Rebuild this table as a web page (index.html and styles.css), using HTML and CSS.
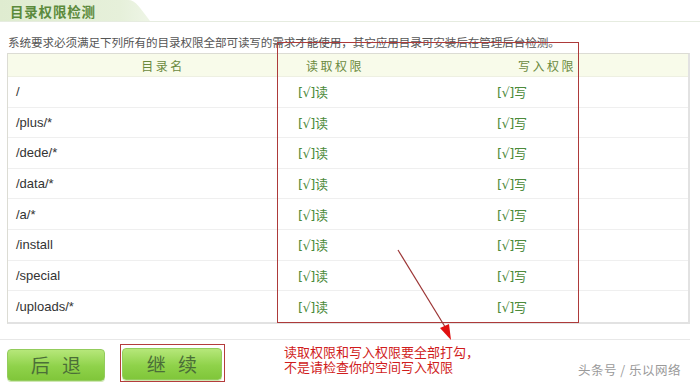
FILE: index.html
```html
<!DOCTYPE html>
<html lang="zh-CN">
<head>
<meta charset="utf-8">
<title>目录权限检测</title>
<link rel="stylesheet" href="styles.css">
</head>
<body>
<div class="page">
  <div class="titlebar">
    <svg class="tab" width="160" height="22" viewBox="0 0 160 22">
      <defs>
        <linearGradient id="tg" x1="0" y1="0" x2="1" y2="0">
          <stop offset="0" stop-color="#dfecd0"/>
          <stop offset="0.8" stop-color="#e6f0da"/>
          <stop offset="1" stop-color="#eef5e6"/>
        </linearGradient>
      </defs>
      <path d="M0 0 H128 C136 0 140 8 150 21 H0 Z" fill="url(#tg)"/>
    </svg>
    <h1 class="title">目录权限检测</h1>
  </div>
  <p class="desc">系统要求必须满足下列所有的目录权限全部可读写的需求才能使用，其它应用目录可安装后在管理后台检测。</p>
  <div class="table">
    <div class="row head">
      <div class="c1">目录名</div>
      <div class="c2">读取权限</div>
      <div class="c3">写入权限</div>
    </div>
    <div class="row"><div class="c1">/</div><div class="c2 ok">[√]读</div><div class="c3 ok">[√]写</div></div>
    <div class="row"><div class="c1">/plus/*</div><div class="c2 ok">[√]读</div><div class="c3 ok">[√]写</div></div>
    <div class="row"><div class="c1">/dede/*</div><div class="c2 ok">[√]读</div><div class="c3 ok">[√]写</div></div>
    <div class="row"><div class="c1">/data/*</div><div class="c2 ok">[√]读</div><div class="c3 ok">[√]写</div></div>
    <div class="row"><div class="c1">/a/*</div><div class="c2 ok">[√]读</div><div class="c3 ok">[√]写</div></div>
    <div class="row"><div class="c1">/install</div><div class="c2 ok">[√]读</div><div class="c3 ok">[√]写</div></div>
    <div class="row"><div class="c1">/special</div><div class="c2 ok">[√]读</div><div class="c3 ok">[√]写</div></div>
    <div class="row last"><div class="c1">/uploads/*</div><div class="c2 ok">[√]读</div><div class="c3 ok">[√]写</div></div>
  </div>
  <div class="footer">
    <button class="btn">后 退</button>
    <span class="mark"><button class="btn">继 续</button></span>
    <p class="note">读取权限和写入权限要全部打勾，<br>不是请检查你的空间写入权限</p>
  </div>

  <div class="redbox"></div>
  <svg class="arrow" width="80" height="100" viewBox="0 0 80 100">
    <line x1="3" y1="2" x2="52" y2="82" stroke="#9b3434" stroke-width="1.2"/>
    <path d="M56 92 L45 80 L54 76 Z" fill="#e01010"/>
  </svg>
  <div class="watermark">头条号 / 乐以网络</div>
</div>
</body>
</html>
```
FILE: styles.css
```css
* { box-sizing: border-box; }
html, body { margin: 0; padding: 0; background: #fff; }
body {
  font-family: "Noto Sans CJK SC", "Liberation Sans", sans-serif;
  width: 700px;
  height: 383px;
  overflow: hidden;
}
.page { position: relative; width: 700px; height: 383px; }

.titlebar {
  position: relative;
  height: 22px;
  border-bottom: 1px solid #e6ece0;
  width: 700px;
}
.tab { position: absolute; left: 0; top: 0; }
.title {
  position: relative;
  margin: 0;
  padding: 3px 0 0 10px;
  font-size: 13.5px;
  line-height: 16px;
  font-weight: bold;
  color: #5b8a3c;
  letter-spacing: 0.8px;
}

.desc {
  margin: 12px 0 0 8px;
  font-size: 11.6px;
  line-height: 16px;
  color: #555;
  letter-spacing: -0.1px;
}

.table {
  margin: 3px 0 0 7px;
  width: 683px;
  border: 1px solid #dcdcd4;
  border-right: 2px solid #e2e2e2;
  border-bottom: 2px solid #e2e2e2;
}
.row {
  display: grid;
  grid-template-columns: 290px 199px 1fr;
  height: 30.6px;
  align-items: center;
  border-bottom: 1px solid #efefef;
  font-size: 13px;
  color: #333;
}
.row.last { border-bottom: none; }
.row.head {
  height: 23px;
  background: #f8fbea;
  border-bottom: 1px solid #eef0e2;
  color: #6b8a3e;
  font-size: 12px;
  letter-spacing: 2.5px;
}
.row.head .c1 { text-align: center; padding-left: 20px; }
.row.head .c2 { padding-left: 8px; }
.row.head .c3 { padding-left: 21px; }
.c1 { padding-left: 8px; font-family: "Liberation Sans", "Noto Sans CJK SC", sans-serif; }
.ok {
  color: #4c8a3a;
  font-size: 13px;
  font-family: "DejaVu Sans", "Noto Sans CJK SC", sans-serif;
  letter-spacing: -0.5px;
}

.footer {
  margin-top: 15px;
  width: 690px;
  border-top: 1px solid #e8e8e8;
  display: flex;
  align-items: flex-start;
  padding: 9px 0 0 7px;
}
.btn {
  width: 98px;
  height: 32px;
  border: 1px solid #93cc5c;
  border-radius: 4px;
  background: linear-gradient(#b6e77a, #8fd24a 55%, #80c63a);
  color: #4b6e38;
  font-family: "Noto Sans CJK SC", sans-serif;
  font-size: 19px;
  letter-spacing: 4px;
  padding: 0 0 0 4px;
  line-height: 30px;
  box-shadow: 0 1px 0 #cfe8b4;
}
.mark {
  display: block;
  margin: -5px 0 0 15px;
  border: 1.5px solid #b43c3c;
  padding: 3px 2px 0 1px;
  height: 38px;
}
.mark .btn { width: 100px; }
.note {
  margin: -5px 0 0 59px;
  font-size: 13px;
  line-height: 15px;
  color: #d01c1c;
  letter-spacing: 0;
}

.redbox {
  position: absolute;
  left: 277px;
  top: 42px;
  width: 302px;
  height: 281px;
  border: 1.5px solid #ad3a3a;
  pointer-events: none;
}
.arrow { position: absolute; left: 395px; top: 248px; }
.watermark {
  position: absolute;
  left: 578px;
  top: 360px;
  font-size: 12.5px;
  color: #9a9a9a;
  letter-spacing: 0.5px;
  text-shadow: 0 0 1px #fff;
}
```
